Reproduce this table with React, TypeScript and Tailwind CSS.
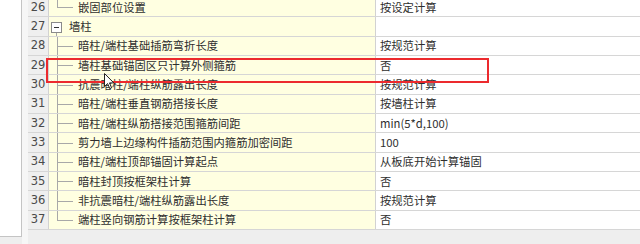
import React from 'react'

type Row = {
  no: number
  name: string
  value: string
  kind: 'group' | 'mid' | 'last'
}

const rows: Row[] = [
  { no: 26, name: '嵌固部位设置', value: '按设定计算', kind: 'last' },
  { no: 27, name: '墙柱', value: '', kind: 'group' },
  { no: 28, name: '暗柱/端柱基础插筋弯折长度', value: '按规范计算', kind: 'mid' },
  { no: 29, name: '墙柱基础锚固区只计算外侧箍筋', value: '否', kind: 'mid' },
  { no: 30, name: '抗震暗柱/端柱纵筋露出长度', value: '按规范计算', kind: 'mid' },
  { no: 31, name: '暗柱/端柱垂直钢筋搭接长度', value: '按墙柱计算', kind: 'mid' },
  { no: 32, name: '暗柱/端柱纵筋搭接范围箍筋间距', value: 'min(5*d,100)', kind: 'mid' },
  { no: 33, name: '剪力墙上边缘构件插筋范围内箍筋加密间距', value: '100', kind: 'mid' },
  { no: 34, name: '暗柱/端柱顶部锚固计算起点', value: '从板底开始计算锚固', kind: 'mid' },
  { no: 35, name: '暗柱封顶按框架柱计算', value: '否', kind: 'mid' },
  { no: 36, name: '非抗震暗柱/端柱纵筋露出长度', value: '按规范计算', kind: 'mid' },
  { no: 37, name: '端柱竖向钢筋计算按框架柱计算', value: '否', kind: 'last' },
]

const TreeLines: React.FC<{ kind: Row['kind'] }> = ({ kind }) => {
  if (kind === 'group') {
    return (
      <>
        <span className="absolute left-[2px] top-[5px] flex h-[11px] w-[11px] items-center justify-center border border-[#8a8a8a] bg-white">
          <span className="h-px w-[5px] bg-[#333]" />
        </span>
        <span className="absolute left-[7px] top-[16px] bottom-0 w-px bg-[#a8a8a8]" />
      </>
    )
  }
  return (
    <>
      <span className={`absolute left-[8px] top-0 w-px bg-[#a8a8a8] ${kind === 'last' ? 'h-1/2' : 'h-full'}`} />
      <span className="absolute left-[8px] top-1/2 h-px w-[16px] bg-[#a8a8a8]" />
    </>
  )
}

const App: React.FC = () => {
  return (
    <div
      className="relative flex h-[244px] w-[640px] overflow-hidden bg-[#eeeeee] text-[#2e2e2e]"
      style={{ fontFamily: '"Noto Sans CJK SC", "Noto Sans", sans-serif' }}
    >
      <div className="h-[237px] w-[22px] shrink-0 border-r border-b border-[#c4c4c4] bg-white" />
      <div className="w-[6px] shrink-0 bg-[#f6f6f6]" />
      <div className="mt-[-2px] flex flex-1 flex-col">
        {rows.map((r) => (
          <div key={r.no} className="flex h-[19.35px] shrink-0 border-b border-[#d6d6d6]">
            <div
              className="flex w-[21px] shrink-0 items-center justify-center border-r border-[#d2d2d2] bg-[#efefef] text-[11.5px] text-[#4a4a4a]"
              style={{ fontFamily: '"DejaVu Sans", sans-serif' }}
            >
              {r.no}
            </div>
            <div
              className={`relative flex w-[327px] shrink-0 items-center border-r border-[#d2d2d2] bg-[#ffffe1] text-[11.3px] leading-none ${
                r.kind === 'group' ? 'pl-[20px]' : 'pl-[29px]'
              }`}
            >
              <TreeLines kind={r.kind} />
              {r.name}
            </div>
            <div className="flex flex-1 items-center bg-white pl-[4px] text-[11.3px] leading-none">{r.value}</div>
          </div>
        ))}
      </div>

      <div className="pointer-events-none absolute left-[46px] top-[58px] h-[25px] w-[443px] border-[2.5px] border-[#ec2a2e]" />

      <svg className="pointer-events-none absolute left-[104px] top-[73px]" width="11" height="17" viewBox="0 0 11 17">
        <path d="M0.5 0.5 L0.5 13.5 L3.6 10.6 L5.8 15.6 L7.6 14.8 L5.5 9.9 L9.8 9.9 Z" fill="#ffffff" stroke="#222" strokeWidth="1" strokeLinejoin="round" />
      </svg>
    </div>
  )
}

export default App
